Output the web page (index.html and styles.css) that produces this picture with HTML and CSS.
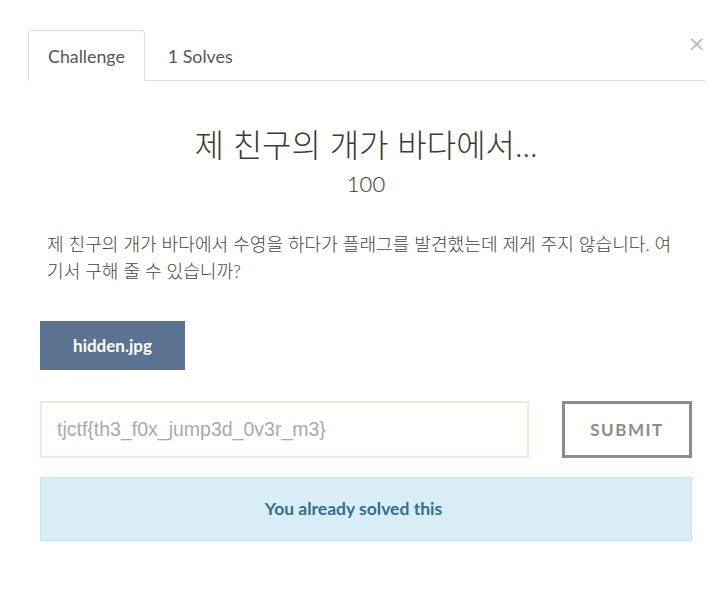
FILE: index.html
```html
<!DOCTYPE html>
<html lang="ko">
<head>
<meta charset="utf-8">
<title>Challenge</title>
<link rel="stylesheet" href="styles.css">
</head>
<body>
<div class="modal">
  <button class="close" aria-label="Close">×</button>
  <ul class="tabs">
    <li class="tab active">Challenge</li>
    <li class="tab">1 Solves</li>
  </ul>
  <div class="content">
    <h2 class="title">제 친구의 개가 바다에서...</h2>
    <h3 class="value">100</h3>
    <p class="desc">제 친구의 개가 바다에서 수영을 하다가 플래그를 발견했는데 제게 주지 않습니다. 여기서 구해 줄 수 있습니까?</p>
    <div class="files"><a class="file-btn">hidden.jpg</a></div>
    <div class="submit-row">
      <input class="flag-input" type="text" value="tjctf{th3_f0x_jump3d_0v3r_m3}">
      <button class="submit-btn">SUBMIT</button>
    </div>
    <div class="alert">You already solved this</div>
  </div>
</div>
</body>
</html>
```
FILE: styles.css
```css
* { box-sizing: border-box; }
html, body { margin: 0; padding: 0; background: #fff; }
body {
  font-family: Lato, "Noto Sans CJK KR", sans-serif;
  color: #444;
}
.modal {
  position: relative;
  width: 728px;
  height: 606px;
  padding: 30px 23px 0 28px;
}
.close {
  position: absolute;
  top: 31px;
  right: 22px;
  border: 0;
  background: none;
  padding: 0;
  font-family: "DejaVu Sans", sans-serif;
  font-size: 22px;
  line-height: 26px;
  color: #bbb;
}
.tabs {
  list-style: none;
  margin: 0;
  padding: 0;
  display: flex;
  border-bottom: 1px solid #ddd;
  height: 51px;
}
.tab {
  font-size: 17.8px;
  color: #555;
  padding: 0 19px;
  height: 51px;
  line-height: 51px;
  border: 1px solid transparent;
  border-radius: 4px 4px 0 0;
  margin-bottom: -1px;
}
.tab.active {
  border-color: #ddd;
  border-bottom-color: #fff;
  background: #fff;
}
.tab + .tab {
  padding-left: 22px;
}
.content {
  padding: 0 13px 0 12px;
}
.title {
  margin: 45px 0 0;
  text-align: center;
  font-weight: 300;
  font-size: 32px;
  line-height: 38px;
  color: #3a3a3a;
}
.value {
  margin: 5px 0 0;
  text-align: center;
  font-weight: 300;
  font-size: 22px;
  line-height: 30px;
  color: #333;
}
.desc {
  margin: 32px 0 0;
  padding: 0 7px;
  font-size: 18.1px;
  font-weight: 300;
  line-height: 27px;
  color: #444;
}
.files {
  margin-top: 36px;
  height: 49px;
}
.file-btn {
  display: inline-block;
  width: 145px;
  height: 49px;
  line-height: 49px;
  text-align: center;
  background: #5b7290;
  color: #fff;
  font-weight: 700;
  font-size: 17px;
}
.submit-row {
  display: flex;
  justify-content: space-between;
  margin-top: 31px;
}
.flag-input {
  width: 489px;
  height: 57px;
  border: 2px solid #e3efdd;
  padding: 0 15px;
  font-family: "Liberation Sans", Arial, sans-serif;
  font-size: 19.5px;
  color: #aaa;
  outline: none;
}
.submit-btn {
  width: 130px;
  height: 57px;
  border: 3px solid #8c8c8c;
  background: #fff;
  color: #8c8c8c;
  font-family: Lato, sans-serif;
  font-weight: 700;
  font-size: 17px;
  letter-spacing: 1.5px;
}
.alert {
  margin-top: 19px;
  height: 64px;
  line-height: 62px;
  padding-right: 25px;
  background: #d9edf7;
  border: 1px solid #bce8f1;
  color: #31708f;
  text-align: center;
  font-weight: 700;
  font-size: 17.5px;
}
```
